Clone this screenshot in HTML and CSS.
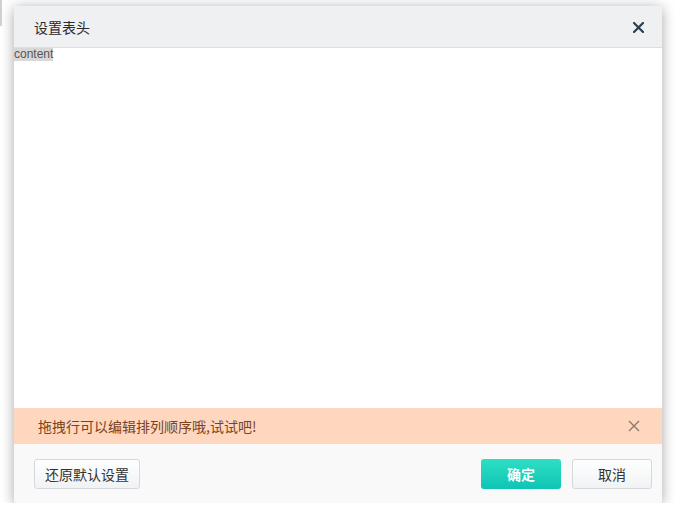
FILE: index.html
```html
<!DOCTYPE html>
<html lang="zh-CN">
<head>
<meta charset="utf-8">
<title>设置表头</title>
<link rel="stylesheet" href="styles.css">
</head>
<body>
<div class="page">
  <div class="edge"></div>
  <div class="dialog">
    <div class="dialog-header">
      <span class="dialog-title">设置表头</span>
      <button class="close-btn" aria-label="关闭">
        <svg width="11" height="11" viewBox="0 0 11 11"><path d="M1 1L10 10M10 1L1 10" stroke="#2c3e50" stroke-width="2.2" stroke-linecap="square"/></svg>
      </button>
    </div>
    <div class="dialog-body">
      <span class="content-label">content</span>
    </div>
    <div class="notice">
      <span class="notice-text">拖拽行可以编辑排列顺序哦,试试吧!</span>
      <button class="notice-close" aria-label="关闭提示">
        <svg width="12" height="12" viewBox="0 0 12 12"><path d="M1 1L11 11M11 1L1 11" stroke="#8a7a6e" stroke-width="1.4"/></svg>
      </button>
    </div>
    <div class="dialog-footer">
      <button class="btn btn-default btn-reset">还原默认设置</button>
      <div class="footer-right">
        <button class="btn btn-primary">确定</button>
        <button class="btn btn-default btn-wide">取消</button>
      </div>
    </div>
  </div>
</div>
</body>
</html>
```

FILE: styles.css
```css
html, body {
  margin: 0;
  padding: 0;
  background: #ffffff;
}
.page {
  display: flex;
  align-items: flex-start;
  padding-top: 6px;
  font-family: "Liberation Sans", "Noto Sans CJK SC", sans-serif;
}
.edge {
  width: 2px;
  height: 26px;
  margin-top: -6px;
  background: #aab4b2;
  opacity: 0.6;
}
.dialog {
  margin-left: 12px;
  width: 648px;
  height: 497px;
  display: flex;
  flex-direction: column;
  background: #ffffff;
  border-radius: 3px;
  box-shadow: 0 2px 14px rgba(0, 0, 0, 0.35);
  overflow: hidden;
}
.dialog-header {
  height: 41px;
  flex: none;
  display: flex;
  align-items: center;
  justify-content: space-between;
  padding: 0 18px 0 20px;
  background: #eef0f2;
  border-bottom: 1px solid #dcdfe2;
}
.dialog-title {
  font-family: "Noto Sans CJK SC", sans-serif;
  font-size: 14px;
  color: #2b2b2b;
}
.close-btn {
  border: 0;
  background: none;
  padding: 0;
  width: 11px;
  height: 11px;
  display: flex;
  margin-top: 2px;
}
.dialog-body {
  flex: 1;
  padding: 0;
}
.content-label {
  display: inline-block;
  vertical-align: top;
  font-family: "Liberation Sans", sans-serif;
  font-size: 12px;
  line-height: 13px;
  color: #555555;
  background: #d8d8d8;
}
.notice {
  height: 36px;
  flex: none;
  display: flex;
  align-items: center;
  justify-content: space-between;
  padding: 0 22px 0 24px;
  background: #ffd7bf;
}
.notice-text {
  font-family: "Noto Sans CJK SC", sans-serif;
  font-size: 14px;
  color: #7a4320;
}
.notice-close {
  border: 0;
  background: none;
  padding: 0;
  display: flex;
  width: 12px;
  height: 12px;
}
.dialog-footer {
  height: 59px;
  flex: none;
  display: flex;
  align-items: center;
  justify-content: space-between;
  padding: 0 10px 0 20px;
  background: #f9f9f9;
}
.footer-right {
  display: flex;
  gap: 11px;
}
.btn {
  height: 30px;
  box-sizing: border-box;
  border-radius: 3px;
  font-family: "Noto Sans CJK SC", sans-serif;
  font-size: 14px;
  padding: 0 11px;
  cursor: pointer;
}
.btn-reset {
  width: 106px;
  padding: 0;
}
.btn-default {
  border: 1px solid #d6d9dc;
  background: linear-gradient(#ffffff, #f1f2f4);
  color: #333333;
}
.btn-wide {
  width: 80px;
}
.btn-primary {
  width: 80px;
  border: 0;
  background: linear-gradient(#2ddfc2, #0fc4b6);
  color: #ffffff;
  font-weight: bold;
}
```
